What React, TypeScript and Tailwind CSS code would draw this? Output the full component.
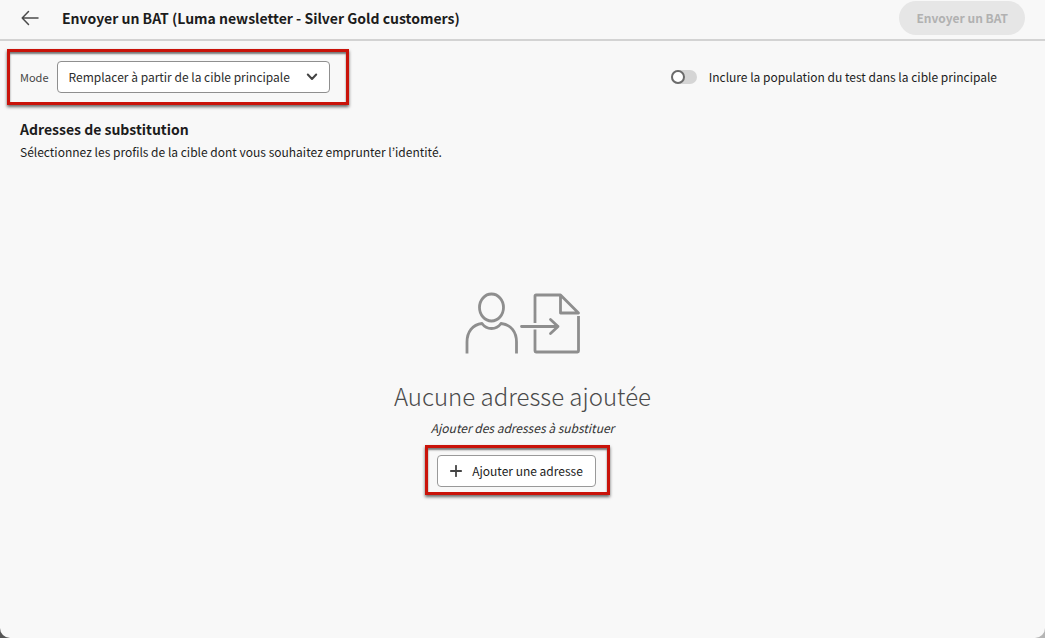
import { useState, type ReactNode } from "react";

function Highlight({ className, children }: { className: string; children: ReactNode }) {
  return (
    <div
      className={`border-3 border-[#c9130a] shadow-[0_2px_3px_#666,inset_0_2px_2px_#777] ${className}`}
    >
      {children}
    </div>
  );
}

function BackArrow() {
  return (
    <svg width="18" height="16" viewBox="0 0 18 16" fill="none" stroke="#4b4b4b" strokeWidth="1.5" strokeLinecap="round" strokeLinejoin="round" aria-hidden="true">
      <path d="M17 8H1.2M7.5 1.5L1.2 8l6.3 6.5" />
    </svg>
  );
}

function EmptyIllustration() {
  return (
    <svg width="116" height="62" viewBox="0 0 116 62" fill="none" stroke="#8e8e8e" strokeWidth="2.8" strokeLinejoin="round" aria-hidden="true">
      <ellipse cx="26.500" cy="15.500" rx="12" ry="13.500" />
      <path d="M2 61.500V50C2 40 7.500 32.500 17 31.500C19.500 35 22.500 36.500 26.500 36.500C30.500 36.500 33.500 35 36 31.500C46 32.500 51.500 40 51.500 50V61.500" />
      <path d="M70 31V4Q70 3 71 3H95.500L113.500 21H95.500V3" />
      <path d="M70 37.500V59Q70 60 71 60H112.500Q113.500 60 113.500 59V24" />
      <path d="M56.500 34.500H93M85.500 27.500L93 34.500L85.500 41.500" strokeLinecap="round" />
    </svg>
  );
}

export default function App() {
  const [included, setIncluded] = useState(false);

  return (
    <div className="min-h-screen bg-gradient-to-r from-[#555] to-[#b5b5b5] font-['Noto_Sans_CJK_KR',sans-serif] text-[#1c1c1c]">
      <div className="flex min-h-screen flex-col rounded-b-[10px] bg-[#f8f8f8]">
        <header className="flex h-[41px] items-start justify-between border-b-2 border-[#d3d3d3] pr-5 pl-[21px]">
          <div className="flex h-9 items-center gap-[23px]">
            <button type="button" aria-label="Retour">
              <BackArrow />
            </button>
            <h1 className="text-sm leading-5 font-bold">
              Envoyer un BAT (Luma newsletter - Silver Gold customers)
            </h1>
          </div>
          <button
            type="button"
            disabled
            className="mt-px h-[34px] rounded-full bg-[#e6e6e6] px-[17px] text-xs leading-5 font-bold text-[#b1b1b1]"
          >
            Envoyer un BAT
          </button>
        </header>

        <main className="flex flex-col pt-2">
          <div className="flex items-center justify-between pr-12 pl-[7px]">
            <Highlight className="flex items-center gap-2 py-[9px] pr-4 pl-[10px]">
              <label htmlFor="mode" className="text-[11px] leading-4 text-[#444]">
                Mode
              </label>
              <div className="relative">
                <select
                  id="mode"
                  className="h-8 w-[273px] appearance-none rounded border border-[#8f8f8f] bg-white pr-8 pl-[11px] text-xs leading-5 text-[#2c2c2c]"
                >
                  <option>Remplacer à partir de la cible principale</option>
                </select>
                <svg className="pointer-events-none absolute top-3 right-3" width="12" height="8" viewBox="0 0 12 8" fill="none" stroke="#444" strokeWidth="2" strokeLinecap="round" strokeLinejoin="round" aria-hidden="true">
                  <path d="M1.800 1.500L6 6l4.200-4.500" />
                </svg>
              </div>
            </Highlight>

            <label className="flex items-center gap-3 text-xs leading-5">
              <span className="flex h-[14px] w-[26px] rounded-full bg-[#d5d5d5] has-checked:justify-end has-focus-visible:outline-2">
                <input
                  type="checkbox"
                  role="switch"
                  checked={included}
                  onChange={(e) => setIncluded(e.target.checked)}
                  className="size-[14px] appearance-none rounded-full border-2 border-[#6b6b6b] bg-white outline-none"
                />
              </span>
              Inclure la population du test dans la cible principale
            </label>
          </div>

          <section className="px-5 pt-[14px]">
            <h2 className="text-sm leading-5 font-bold">Adresses de substitution</h2>
            <p className="mt-[3px] text-xs leading-5">
              Sélectionnez les profils de la cible dont vous souhaitez emprunter l’identité.
            </p>
          </section>

          <section className="flex flex-col items-center pt-[130px] pb-10">
            <EmptyIllustration />
            <h3 className="mt-6 text-2xl leading-9 font-light text-[#4b4b4b]">
              Aucune adresse ajoutée
            </h3>
            <p className="mt-1 text-xs leading-5 text-[#333] italic">
              Ajouter des adresses à substituer
            </p>
            <Highlight className="mt-[7px] mr-[10px] pt-[7px] pr-[11px] pb-[5px] pl-[9px]">
              <button
                type="button"
                className="flex h-8 items-center gap-[10px] rounded border border-[#999] bg-white px-3 text-xs leading-5"
              >
                <svg width="12" height="12" viewBox="0 0 12 12" stroke="#444" strokeWidth="1.800" strokeLinecap="round" aria-hidden="true">
                  <path d="M6 .8v10.400M.8 6h10.400" />
                </svg>
                Ajouter une adresse
              </button>
            </Highlight>
          </section>
        </main>
      </div>
    </div>
  );
}
